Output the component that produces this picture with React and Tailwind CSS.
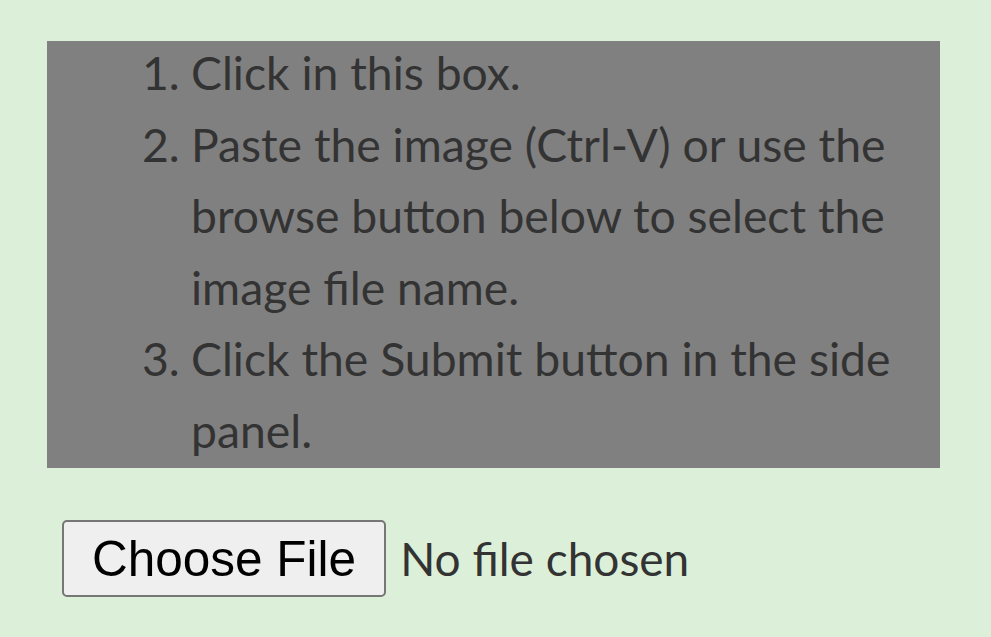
import React from "react";

const steps = [
  "Click in this box.",
  "Paste the image (Ctrl-V) or use the browse button below to select the image file name.",
  "Click the Submit button in the side panel.",
];

export default function App() {
  return (
    <div className="min-h-screen w-full bg-[#dcefd8] pl-[47px] pt-[41px] pr-[51px]">
      {/* paste area */}
      <div className="h-[427px] bg-[#808080] overflow-hidden">
        <ol
          className="-mt-[4px] pl-[95px] pr-[36px] text-[46.3px] leading-[71.5px] text-[#333333]"
          style={{ fontFamily: "Lato, 'Open Sans', sans-serif" }}
        >
          {steps.map((s, i) => (
            <li key={i} className="flex">
              <span className="w-[49px] shrink-0">{i + 1}.</span>
              <span>{s}</span>
            </li>
          ))}
        </ol>
      </div>

      {/* file input */}
      <div className="mt-[52px] ml-[15px] flex items-center gap-[14px]">
        <button
          className="h-[77px] px-[28px] border-2 border-[#767676] rounded-[5px] bg-[#efefef] text-black text-[49.5px] leading-none"
          style={{ fontFamily: "'Liberation Sans', Arial, sans-serif" }}
        >
          Choose File
        </button>
        <span
          className="text-[46px] text-[#333333]"
          style={{ fontFamily: "Lato, 'Open Sans', sans-serif" }}
        >
          No file chosen
        </span>
      </div>
    </div>
  );
}
